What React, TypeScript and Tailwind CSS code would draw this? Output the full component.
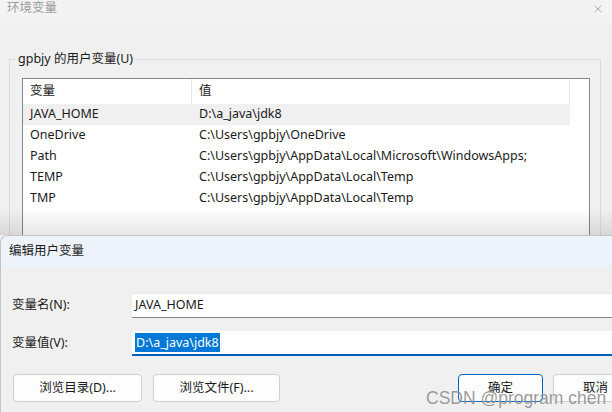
import { X } from 'lucide-react';

const rows = [
  { name: 'JAVA_HOME', value: 'D:\\a_java\\jdk8', selected: true },
  { name: 'OneDrive', value: 'C:\\Users\\gpbjy\\OneDrive' },
  { name: 'Path', value: 'C:\\Users\\gpbjy\\AppData\\Local\\Microsoft\\WindowsApps;' },
  { name: 'TEMP', value: 'C:\\Users\\gpbjy\\AppData\\Local\\Temp' },
  { name: 'TMP', value: 'C:\\Users\\gpbjy\\AppData\\Local\\Temp' },
];

const font = { fontFamily: '"Noto Sans", "Noto Sans CJK SC", sans-serif' };

const App = () => {
  return (
    <div
      className="relative w-[612px] h-[412px] overflow-hidden bg-[#f0f0f0] text-[12.5px] text-[#1a1a1a]"
      style={font}
    >
      {/* Background window: 环境变量 */}
      <div className="flex flex-col h-[235px]">
        <div className="shrink-0 h-[25px] bg-[#f3f3f3] flex items-start justify-between pl-[7px] pr-[8px]">
          <span className="text-[#9b9b9b] leading-[16px]">环境变量</span>
          <X className="w-[12px] h-[12px] text-[#7a7a7a] mt-[3px]" strokeWidth={1.2} />
        </div>
        <div className="flex-1 min-h-0 pt-[34px] pl-[9px] pr-[11px]">
          <div className="relative border border-[#dcdcdc] border-b-0 h-[176px] pt-[18px] pl-[12px] pr-[10px]">
            <span className="absolute -top-[9px] left-[6px] px-[2px] bg-[#f0f0f0] leading-[16px]">
              gpbjy 的用户变量(U)
            </span>
            <div className="border border-[#828790] border-b-0 bg-white h-[160px] pr-[19px]">
              <div className="flex h-[25px]">
                <div className="w-[169px] pl-[7px] flex items-center border-r border-[#e5e5e5]">变量</div>
                <div className="flex-1 pl-[7px] flex items-center border-r border-[#e5e5e5]">值</div>
              </div>
              {rows.map((r) => (
                <div
                  key={r.name}
                  className={`flex h-[21px] items-center ${r.selected ? 'bg-[#f0f0f0]' : ''}`}
                >
                  <div className="w-[169px] pl-[7px]">{r.name}</div>
                  <div className="flex-1 pl-[7px] whitespace-nowrap">{r.value}</div>
                </div>
              ))}
            </div>
          </div>
        </div>
      </div>

      {/* shadow cast by the front dialog */}
      <div className="absolute left-0 right-0 top-[208px] h-[27px] bg-gradient-to-b from-transparent to-black/10 pointer-events-none" />

      {/* Front dialog: 编辑用户变量 */}
      <div className="absolute left-0 top-[235px] w-[640px] h-[190px] rounded-tl-[8px] bg-[#f0f0f0] border-t border-l border-[#c4c4c4] overflow-hidden flex flex-col">
        <div className="shrink-0 h-[31px] bg-[#eef2fb] flex items-center pl-[8px]">编辑用户变量</div>
        <div className="flex flex-col pt-[26px] pl-[11px]">
          <div className="flex items-center h-[25px]">
            <span className="w-[120px]">变量名(N):</span>
            <div className="flex-1 h-[25px] bg-white border-t border-[#e8e8e8] border-b border-b-[#868686] flex items-center pl-[3px]">
              JAVA_HOME
            </div>
          </div>
          <div className="flex items-center h-[25px] mt-[13px]">
            <span className="w-[120px]">变量值(V):</span>
            <div className="flex-1 h-[25px] bg-white border-b-2 border-[#005fb8] flex items-center pl-[3px]">
              <span className="bg-[#0078d7] text-white px-[1px] leading-[19px]">D:\a_java\jdk8</span>
            </div>
          </div>
          <div className="flex mt-[18px] pl-[1px]">
            <button className="w-[129px] h-[28px] rounded-[4px] border border-[#d0d0d0] bg-[#fdfdfd]">
              浏览目录(D)...
            </button>
            <button className="ml-[11px] w-[127px] h-[28px] rounded-[4px] border border-[#d0d0d0] bg-[#fdfdfd]">
              浏览文件(F)...
            </button>
            <button className="ml-[178px] w-[85px] h-[28px] rounded-[4px] border border-[#0067c0] bg-[#fdfdfd]">
              确定
            </button>
            <button className="ml-[10px] w-[85px] h-[28px] rounded-[4px] border border-[#d0d0d0] bg-[#fdfdfd]">
              取消
            </button>
          </div>
        </div>
      </div>

      {/* watermark */}
      <div
        className="absolute left-[426px] top-[385px] text-[17.5px] text-[#6e6e6e]/70 whitespace-nowrap pointer-events-none"
        style={{ fontFamily: '"Liberation Sans", Arial, sans-serif', textShadow: '0 0 1px rgba(255,255,255,0.6)' }}
      >
        CSDN @program chen
      </div>
    </div>
  );
};

export default App;
